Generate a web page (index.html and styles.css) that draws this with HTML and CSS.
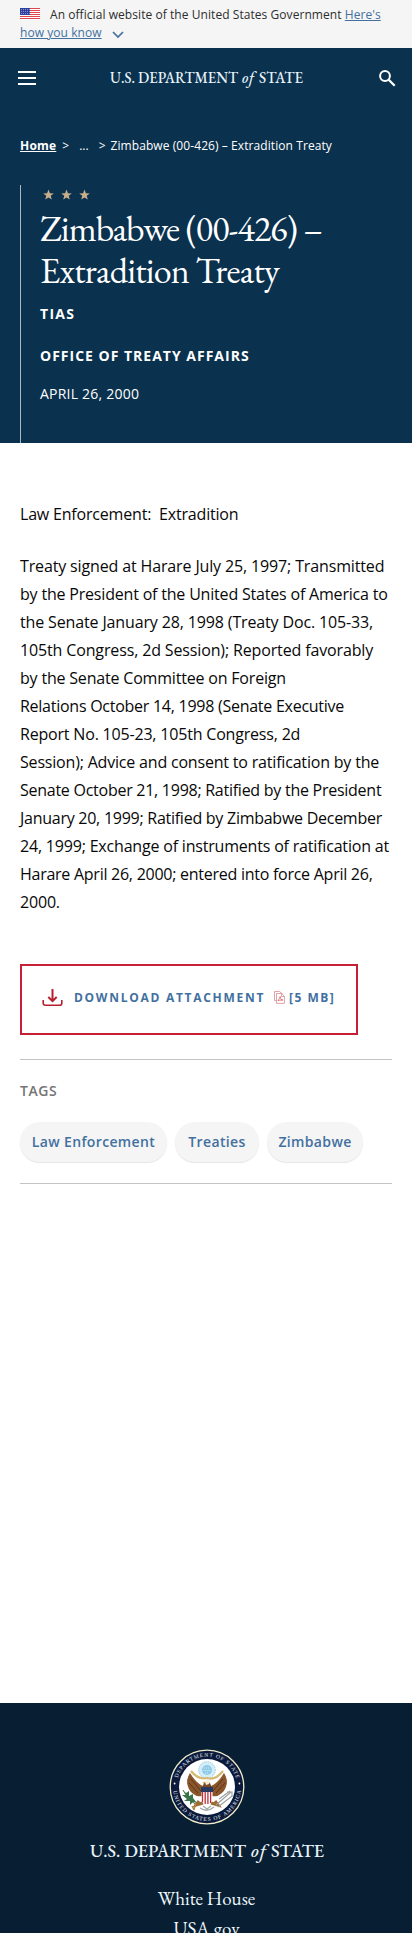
FILE: index.html
```html
<!DOCTYPE html>
<html lang="en">
<head>
<meta charset="utf-8">
<meta name="viewport" content="width=device-width, initial-scale=1">
<title>Zimbabwe (00-426) – Extradition Treaty</title>
<link rel="stylesheet" href="styles.css">
</head>
<body>
<div class="banner">
  <svg class="flag" viewBox="0 0 20 12" width="20" height="12"><rect width="20" height="12" fill="#fff"/><path d="M0 .5h20M0 2.5h20M0 4.5h20M0 6.5h20M0 8.5h20M0 10.5h20" stroke="#e0444c" stroke-width="1.1"/><rect width="10" height="7" fill="#2f3f9e"/><path d="M1 1.5h9M1 3.5h9M1 5.5h9" stroke="#aab4e8" stroke-width=".7" stroke-dasharray="1 1"/></svg><span class="banner-text">An official website of the United States Government</span> <a class="banner-link" href="#">Here's<br>how you know</a><svg class="chev" viewBox="0 0 12 8" width="12" height="8"><path d="M1 1l5 5 5-5" fill="none" stroke="#42709f" stroke-width="1.7"/></svg>
</div>
<header class="hero">
  <nav class="nav">
    <div class="menu"><i></i><i></i><i></i></div>
    <svg class="wordmark" width="196" height="22" viewBox="0 0 196 22"><text x="1" y="16" font-size="15.5" textLength="128" lengthAdjust="spacingAndGlyphs">U.S. DEPARTMENT</text><text x="133" y="16" font-size="15.5" font-style="italic" textLength="12">of</text><text x="150" y="16" font-size="15.5" textLength="44" lengthAdjust="spacingAndGlyphs">STATE</text></svg>
    <svg class="search" width="17" height="17" viewBox="0 0 17 17"><circle cx="6" cy="6" r="4.9" fill="none" stroke="#fff" stroke-width="2"/><path d="M9.7 9.7l6 6" stroke="#fff" stroke-width="2.3"/></svg>
  </nav>
  <div class="crumbs"><a href="#">Home</a><span class="gt1">&gt;</span><span class="dots">...</span><span class="gt2">&gt;</span><span class="current">Zimbabwe (00-426) – Extradition Treaty</span></div>
  <div class="headline">
    <svg class="stars" width="48" height="12" viewBox="0 0 48 12"><defs><path id="star" d="M5.5 .5L6.9 4.3L10.8 4.4L7.7 6.8L8.8 10.6L5.5 8.4L2.2 10.6L3.3 6.8L.2 4.4L4.1 4.3Z"/></defs><g fill="#c9ae8c"><use href="#star"/><use href="#star" x="18"/><use href="#star" x="36"/></g></svg>
    <h1><span class="t1">Zimbabwe (00-426) –</span><br><span class="t2">Extradition Treaty</span></h1>
    <p class="kind">TIAS</p>
    <p class="office">OFFICE OF TREATY AFFAIRS</p>
    <p class="date">APRIL 26, 2000</p>
  </div>
</header>
<main class="content">
  <p>Law Enforcement:&nbsp; Extradition</p>
  <p><span class="wide">Treaty signed at Harare July 25, 1997; Transmitted</span><br>by the President of the United States of America to<br><span class="wide">the Senate January 28, 1998 (Treaty Doc. 105-33,<br>105th Congress, 2d Session); Reported favorably</span><br>by the Senate Committee on Foreign<br><span class="tight">Relations October 14, 1998 (Senate Executive</span><br>Report No. 105-23, 105th Congress, 2d<br>Session); Advice and consent to ratification by the<br><span class="tight">Senate October 21, 1998; Ratified by the President<br>January 20, 1999; Ratified by Zimbabwe December</span><br>24, 1999; Exchange of instruments of ratification at<br><span class="tight">Harare April 26, 2000; entered into force April 26,</span><br>2000.</p>
  <a class="download" href="#">
    <svg class="dl" width="21" height="19" viewBox="0 0 21 19"><path d="M10.5 1v12M6.3 9l4.2 4.2L14.7 9" fill="none" stroke="#b5212f" stroke-width="2"/><path d="M1.2 12v3.2a2 2 0 0 0 2 2h14.6a2 2 0 0 0 2-2V12" fill="none" stroke="#b5212f" stroke-width="1.6"/></svg>
    <span class="dl-label">DOWNLOAD ATTACHMENT</span>
    <svg class="pdf" width="11" height="13" viewBox="0 0 11 13"><path d="M2.5 9.5h-2v-9h5l3 2.5M2.5 2.5h5.2l2.7 2.7v7.2H2.5zM7.5 2.5v3h3" fill="none" stroke="#dd8b8d" stroke-width=".8"/><path d="M4 10l2.2-4.5L7 8.5l2 .5-3.5.3z" fill="none" stroke="#d0595f" stroke-width=".7"/></svg>
    <span class="dl-size">[5 MB]</span>
  </a>
  <section class="tags">
    <h2>TAGS</h2>
    <div class="chips"><a class="c1" href="#">Law Enforcement</a><a class="c2" href="#">Treaties</a><a class="c3" href="#">Zimbabwe</a></div>
  </section>
</main>
<footer class="footer">
  <svg class="seal" width="76" height="76" viewBox="0 0 76 76">
    <defs><path id="arcTop" d="M7.6 38a30.4 30.4 0 0 1 60.8 0"/><path id="arcBottom" d="M4 38a34 34 0 0 0 68 0"/></defs>
    <circle cx="38" cy="38" r="36.8" fill="#0b1a3c" stroke="#efeccb" stroke-width="1.3"/>
    <circle cx="38" cy="38" r="28" fill="#fff"/>
    <g class="seal-text"><text><textPath href="#arcTop" startOffset="9" textLength="78">DEPARTMENT OF STATE</textPath></text><text><textPath href="#arcBottom" startOffset="4" textLength="99">UNITED STATES OF AMERICA</textPath></text></g>
    <circle cx="5.6" cy="34.5" r=".9" fill="#fff"/><circle cx="70.4" cy="34.5" r=".9" fill="#fff"/>
    <circle cx="38" cy="21" r="8.3" fill="#d4eef8" stroke="#79b9d6" stroke-width=".7" stroke-dasharray="1.4 .8"/>
    <circle cx="38" cy="21" r="5" fill="#8fcbe8"/><path d="M35 19h6M34.500 21.500h7M36 24h4" stroke="#e8f7fc" stroke-width=".8" stroke-dasharray="1 1"/>
    <path d="M22 22q7 9 16 7q8 3 16-7" fill="none" stroke="#d7b971" stroke-width="2.200"/>
    <path d="M34 37Q27 34 21 24Q17 30 18.500 36Q20 43 26 46Q28 48 33 47ZM42 37Q49 34 55 24Q59 30 57.500 36Q56 43 50 46Q48 48 43 47Z" fill="#8b552b"/>
    <path d="M22 30l10 12M20 34l9 10M54 30L44 42M56 34l-9 10" stroke="#573019" stroke-width=".9"/>
    <path d="M33 39l2-5 3-2 3 2 2 5z" fill="#794a28"/><path d="M36 33l2-2 3 1-1 3-3 1z" fill="#f5edda"/><path d="M36 33l-2 1" stroke="#dba630" stroke-width="1.300"/>
    <path d="M34 54l-7 2 3-4M42 54l7 2-3-4" fill="none" stroke="#9c6a32" stroke-width="3"/>
    <path d="M32.500 39h11v12q-1 4-5.500 5q-4.500-1-5.500-5z" fill="#fff"/><path d="M33.500 42v11M36.200 42v13M38.900 42v13M41.600 42v12" stroke="#b9313d" stroke-width="1.300"/><path d="M32 38h12v5H32z" fill="#273863"/>
    <path d="M14 41q4 9 12 14" fill="none" stroke="#50713c" stroke-width="1"/><path d="M14 42l3 4-4 0 5 4-3 2 6 0 0 4 3-3 4 1-4-5 0-4-4 2 0-5-3 2z" fill="#39744b"/>
    <path d="M27 54l-2 7M23 57l2 4" stroke="#a98544" stroke-width="1.300"/>
    <path d="M47 56l15-13M49 58l14-11M50 50l11-8M58 43l5 0v5" fill="none" stroke="#9ca0a0" stroke-width="1.100"/>
    <path d="M31 59q7 5 14-1M34 57l4 3 4-3" fill="none" stroke="#a5aaa9" stroke-width="1.300"/>
  </svg>
  <svg class="wordmark" width="238" height="26" viewBox="0 0 238 26"><text x="2" y="19" font-size="19" textLength="156" lengthAdjust="spacingAndGlyphs">U.S. DEPARTMENT</text><text x="163" y="19" font-size="19" font-style="italic" textLength="15">of</text><text x="183" y="19" font-size="19" textLength="53" lengthAdjust="spacingAndGlyphs">STATE</text></svg>
  <a href="#" class="f1">White House</a>
  <a href="#" class="f2">USA.gov</a>
</footer>
</body>
</html>
```
FILE: styles.css
```css
* { box-sizing: border-box; }
html { overflow: hidden; }
body { margin: 0; height: 1933px; overflow: hidden; display: flex; flex-direction: column; background: #fff; color: #080808; font-family: "Open Sans", sans-serif; }
p, h1, h2 { margin: 0; }
svg { display: block; flex: none; }
.banner { height: 48px; flex: none; padding: 6px 20px 0; background: #f5f5f5; color: #2d2d2d; font-size: 12px; line-height: 18px; white-space: nowrap; letter-spacing: .06px; }
.flag { display: inline-block; margin-right: 10px; vertical-align: -1px; }
.banner-link { color: #42709f; }
.chev { display: inline-block; margin-left: 10px; vertical-align: -2px; }
.hero { height: 395px; flex: none; display: flex; flex-direction: column; background: #0a314d; color: #fff; }
.nav { height: 60px; flex: none; padding: 0 16px 0 18px; display: flex; align-items: center; }
.menu { width: 18px; height: 14px; display: flex; flex-direction: column; justify-content: space-between; }
.menu i { height: 2px; background: #fff; }
.nav .wordmark { margin: -1px 0 0 73px; }
.search { margin-left: auto; }
.wordmark { fill: #e7f2fa; font-family: "EB Garamond", "Liberation Serif", serif; font-weight: 500; }
.crumbs { height: 18px; margin: 29px 20px 0; display: flex; font-size: 12px; line-height: 18px; white-space: nowrap; }
.crumbs a { color: #fff; font-weight: 700; letter-spacing: .2px; }
.gt1 { margin-left: 6px; }
.dots { margin-left: 10px; }
.gt2 { margin-left: 10px; }
.current { margin-left: 5px; letter-spacing: .08px; }
.headline { flex: 1; margin: 30px 20px 0; padding-left: 19px; border-left: 1px solid #a9b8c1; }
.stars { margin: 4px 0 0 3px; }
h1 { margin-top: 7px; font-family: "EB Garamond", "Liberation Serif", serif; font-size: 36px; line-height: 42px; font-weight: 400; white-space: nowrap; }
.t1 { letter-spacing: -.92px; }
.t2 { letter-spacing: -.76px; }
.kind, .office { font-size: 14px; line-height: 20px; font-weight: 700; letter-spacing: 1px; }
.kind { margin-top: 12px; letter-spacing: 1.3px; }
.office { margin-top: 22px; }
.date { margin-top: 18px; font-size: 14px; line-height: 20px; letter-spacing: .22px; }
.content { flex: none; height: 1260px; padding: 57px 20px 0; font-size: 16px; line-height: 28px; letter-spacing: -.19px; white-space: nowrap; }
.content > p + p { margin-top: 24px; }
.wide { letter-spacing: -.14px; }
.tight { letter-spacing: -.26px; }
.download { width: 338px; height: 71px; margin-top: 48px; padding: 0 0 3px 20px; border: 2px solid #c71f36; display: flex; align-items: center; color: #42709f; font-size: 12px; line-height: 18px; font-weight: 700; letter-spacing: 1.72px; text-decoration: none; }
.dl { margin-top: -2px; }
.dl-label { margin-left: 11px; width: 191px; }
.pdf { margin: -2px 0 0 9px; }
.dl-size { margin-left: 4px; letter-spacing: 1.5px; }
.tags { margin-top: 24px; height: 125px; border-top: 1px solid #c4c4c4; border-bottom: 1px solid #c4c4c4; }
.tags h2 { margin-top: 21px; font-size: 14px; line-height: 20px; font-weight: 600; letter-spacing: .6px; color: #757575; }
.chips { display: flex; gap: 8px; margin-top: 21px; letter-spacing: .35px; }
.chips a { height: 40px; border-radius: 20px; background: #f5f5f5; color: #42709f; font-size: 14px; line-height: 39px; font-weight: 600; text-align: center; text-decoration: none; box-shadow: 0 1px 1px #e5e5e5; }
.c1 { width: 147px; }
.c2 { width: 84px; }
.c3 { width: 96px; }
.footer { height: 230px; flex: none; padding: 46px 0 0 1px; overflow: hidden; display: flex; flex-direction: column; align-items: center; background: #081f33; color: #edf7fc; }
.seal-text { fill: #e8eef2; font: 5.5px "Liberation Serif", serif; }
.footer .wordmark { margin-top: 13px; }
.footer a { color: inherit; font-family: "EB Garamond", "Liberation Serif", serif; font-size: 19px; line-height: 30px; text-decoration: none; }
.f1 { margin-top: 20px; }
```
